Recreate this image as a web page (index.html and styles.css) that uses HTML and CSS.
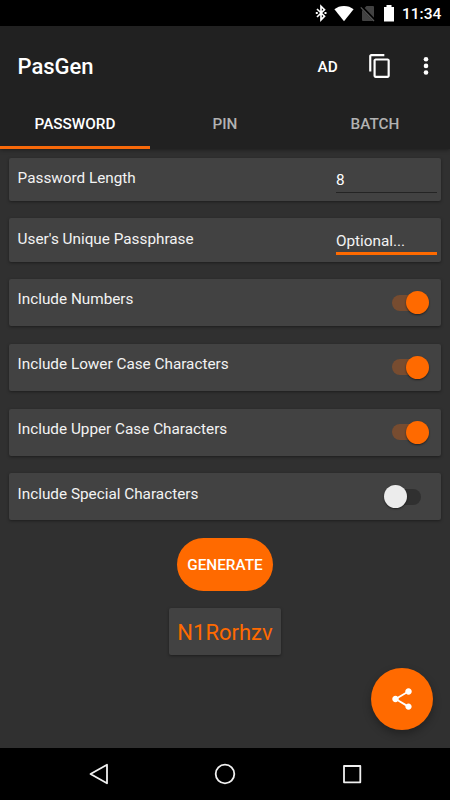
FILE: index.html
```html
<!DOCTYPE html>
<html lang="en">
<head>
<meta charset="utf-8">
<title>PasGen</title>
<link rel="stylesheet" href="styles.css">
</head>
<body>
<div class="screen">
  <div class="status">
    <svg class="bluetooth" width="12" height="18" viewBox="0 0 12 18"><path d="M2 5l7.500 7.200L6 15.800V2.200l3.500 3.500L2 13" fill="none" stroke="#fff" stroke-width="1.700"/><path d="M.8 8h2v2h-2zM9.500 8h2v2h-2z" fill="#fff"/></svg>
    <svg class="wifi" width="20" height="17" viewBox="0 0 20 17"><path d="M10 16.300L.4 4.300C3 2.200 6.200 1 10 1s7 1.200 9.600 3.300z" fill="#fff"/></svg>
    <svg class="nosim" width="16" height="17" viewBox="0 0 16 17"><path d="M2 5.500L6.500 1H13q1 0 1 1v13q0 1-1 1H3q-1 0-1-1z" fill="#424242"/><path d="M1.200 1.500l13.500 14" stroke="#000" stroke-width="3"/><path d="M.8 2.400l13.200 13.600" stroke="#555" stroke-width="1.300"/></svg>
    <svg class="battery" width="12" height="17" viewBox="0 0 12 17"><path d="M3.500 0h5v2H11v14.500H1V2h2.500z" fill="#fff"/></svg>
    <span class="clock">11:34</span>
  </div>
  <header class="appbar">
    <div class="toolbar">
      <h1 class="title">PasGen</h1>
      <span class="ad">AD</span>
      <svg class="copy" width="26" height="26" viewBox="0 0 24 24"><path fill="#fff" d="M16 1H4c-1.100 0-2 .9-2 2v14h2V3h12V1zm3 4H8c-1.100 0-2 .9-2 2v14c0 1.100.9 2 2 2h11c1.100 0 2-.9 2-2V7c0-1.100-.9-2-2-2zm0 16H8V7h11v14z"/></svg>
      <svg class="more" width="6" height="20" viewBox="0 0 6 20"><g fill="#fff"><circle cx="3" cy="3.300" r="2.300"/><circle cx="3" cy="9.900" r="2.300"/><circle cx="3" cy="16.500" r="2.300"/></g></svg>
    </div>
    <nav class="tabs">
      <div class="tab active">PASSWORD</div>
      <div class="tab">PIN</div>
      <div class="tab">BATCH</div>
    </nav>
  </header>
  <main class="content">
    <section class="card field"><span class="label">Password Length</span><div class="input">8</div></section>
    <section class="card field"><span class="label">User's Unique Passphrase</span><div class="input focused">Optional...</div></section>
    <section class="card option"><span class="label">Include Numbers</span><i class="switch on"></i></section>
    <section class="card option"><span class="label">Include Lower Case Characters</span><i class="switch on"></i></section>
    <section class="card option"><span class="label">Include Upper Case Characters</span><i class="switch on"></i></section>
    <section class="card option"><span class="label">Include Special Characters</span><i class="switch"></i></section>
    <div class="generate"><span class="generate-text">GENERATE</span></div>
    <div class="result"><span class="result-text">N1Rorhzv</span></div>
    <div class="fab"><svg width="26" height="26" viewBox="0 0 24 24"><path fill="#fff" d="M18 16.080c-.76 0-1.440.3-1.960.77L8.910 12.700c.05-.23.09-.46.09-.7s-.04-.47-.09-.7l7.050-4.110c.54.5 1.250.81 2.040.81 1.660 0 3-1.340 3-3s-1.340-3-3-3-3 1.340-3 3c0 .24.04.47.09.7L8.040 9.810C7.500 9.310 6.790 9 6 9c-1.660 0-3 1.340-3 3s1.340 3 3 3c.79 0 1.500-.31 2.040-.81l7.120 4.160c-.05.21-.08.43-.08.65 0 1.610 1.310 2.920 2.920 2.920s2.920-1.310 2.920-2.920-1.310-2.920-2.920-2.920z"/></svg></div>
  </main>
  <footer class="navbar">
    <svg width="22" height="22" viewBox="0 0 22 22"><path d="M19 1.700v18.600L2.500 11z"/></svg>
    <svg width="22" height="22" viewBox="0 0 22 22"><circle cx="11" cy="11" r="9.300"/></svg>
    <svg width="22" height="22" viewBox="0 0 22 22"><path d="M3 3h16.300v16.300H3z"/></svg>
  </footer>
</div>
</body>
</html>
```
FILE: styles.css
```css
* { box-sizing: border-box; }
body { margin: 0; background: #303030; font-family: Roboto, "Liberation Sans", sans-serif; color: #fff; }
svg { display: block; flex: none; }
.screen { width: 450px; height: 800px; display: flex; flex-direction: column; overflow: hidden; }
.status { height: 26px; background: #000; display: flex; align-items: center; padding-left: 315px; flex: none; }
.wifi { margin-left: 7px; }
.nosim { margin-left: 6px; }
.battery { margin-left: 7px; }
.clock { font-size: 15.500px; font-weight: 500; line-height: 26px; margin: 2px 0 0 7px; }
.appbar { height: 123px; background: #212121; flex: none; z-index: 1; box-shadow: 0 1px 4px rgba(0,0,0,.4); }
.toolbar { height: 71px; padding: 9px 0 0 17.500px; display: flex; align-items: center; }
.title { margin: 2px 0 0; width: 300px; font-size: 22px; font-weight: 500; line-height: 28px; }
.ad { width: 49.500px; font-size: 15.300px; font-weight: 500; margin-top: 1px; }
.more { margin-left: 30px; }
.tabs { height: 52px; display: grid; grid-template-columns: repeat(3, 1fr); }
.tab { text-align: center; font-size: 15.300px; font-weight: 500; line-height: 54px; height: 52px; color: #b2b2b2; }
.tab.active { color: #fff; box-shadow: inset 0 -3px #f8690a; }
.content { flex: 1; padding: 8.500px 9px 0; display: flex; flex-direction: column; position: relative; }
.card { display: flex; justify-content: space-between; background: #424242; border-radius: 2px; box-shadow: 0 1px 3px rgba(0,0,0,.4); padding-left: 8.600px; margin-bottom: 17.600px; flex: none; }
.label { font-size: 15.300px; line-height: 20px; padding-top: 10.200px; color: #f3f3f3; }
.field { height: 43.300px; padding-right: 4px; }
.option { height: 47.100px; padding-right: 12px; }
.input { width: 101px; height: 35px; padding-top: 12.500px; font-size: 15.300px; line-height: 20px; border-bottom: 1px solid #242424; }
.input.focused { height: 36.500px; border-bottom: 3px solid #ff6a00; color: #f3f3f3; }
.switch { width: 45px; height: 23px; margin-top: 12px; display: flex; align-items: center; position: relative; }
.switch::before { content: ""; width: 37px; height: 16px; border-radius: 8px; background: #303030; }
.switch::after { content: ""; position: absolute; left: 0; top: 0; width: 23px; height: 23px; border-radius: 50%; background: #ececec; box-shadow: 0 1px 2px rgba(0,0,0,.5); }
.switch.on::before { background: #774c30; margin-left: 8px; }
.switch.on::after { left: 22px; background: #ff6a00; }
.generate { align-self: center; width: 96px; height: 53px; border-radius: 27px; background: #ff6a00; display: flex; align-items: center; justify-content: center; font-size: 15.300px; font-weight: 500; flex: none; }
.result { align-self: center; width: 112px; height: 47px; margin-top: 17px; border-radius: 2px; background: #424242; box-shadow: 0 1px 3px rgba(0,0,0,.4); display: flex; align-items: center; justify-content: center; font-size: 22px; color: #ff6a00; flex: none; }
.result-text { padding-top: 1px; }
.fab { position: absolute; right: 17px; bottom: 18px; width: 62px; height: 62px; border-radius: 50%; background: #ff6a00; box-shadow: 0 4px 8px rgba(0,0,0,.3); display: flex; align-items: center; justify-content: center; }
.navbar { height: 52px; background: #000; display: flex; align-items: center; justify-content: space-between; padding: 0 87.500px; flex: none; z-index: 1; }
.navbar svg { fill: none; stroke: #f0f0f0; stroke-width: 1.800; stroke-linejoin: round; }
```
